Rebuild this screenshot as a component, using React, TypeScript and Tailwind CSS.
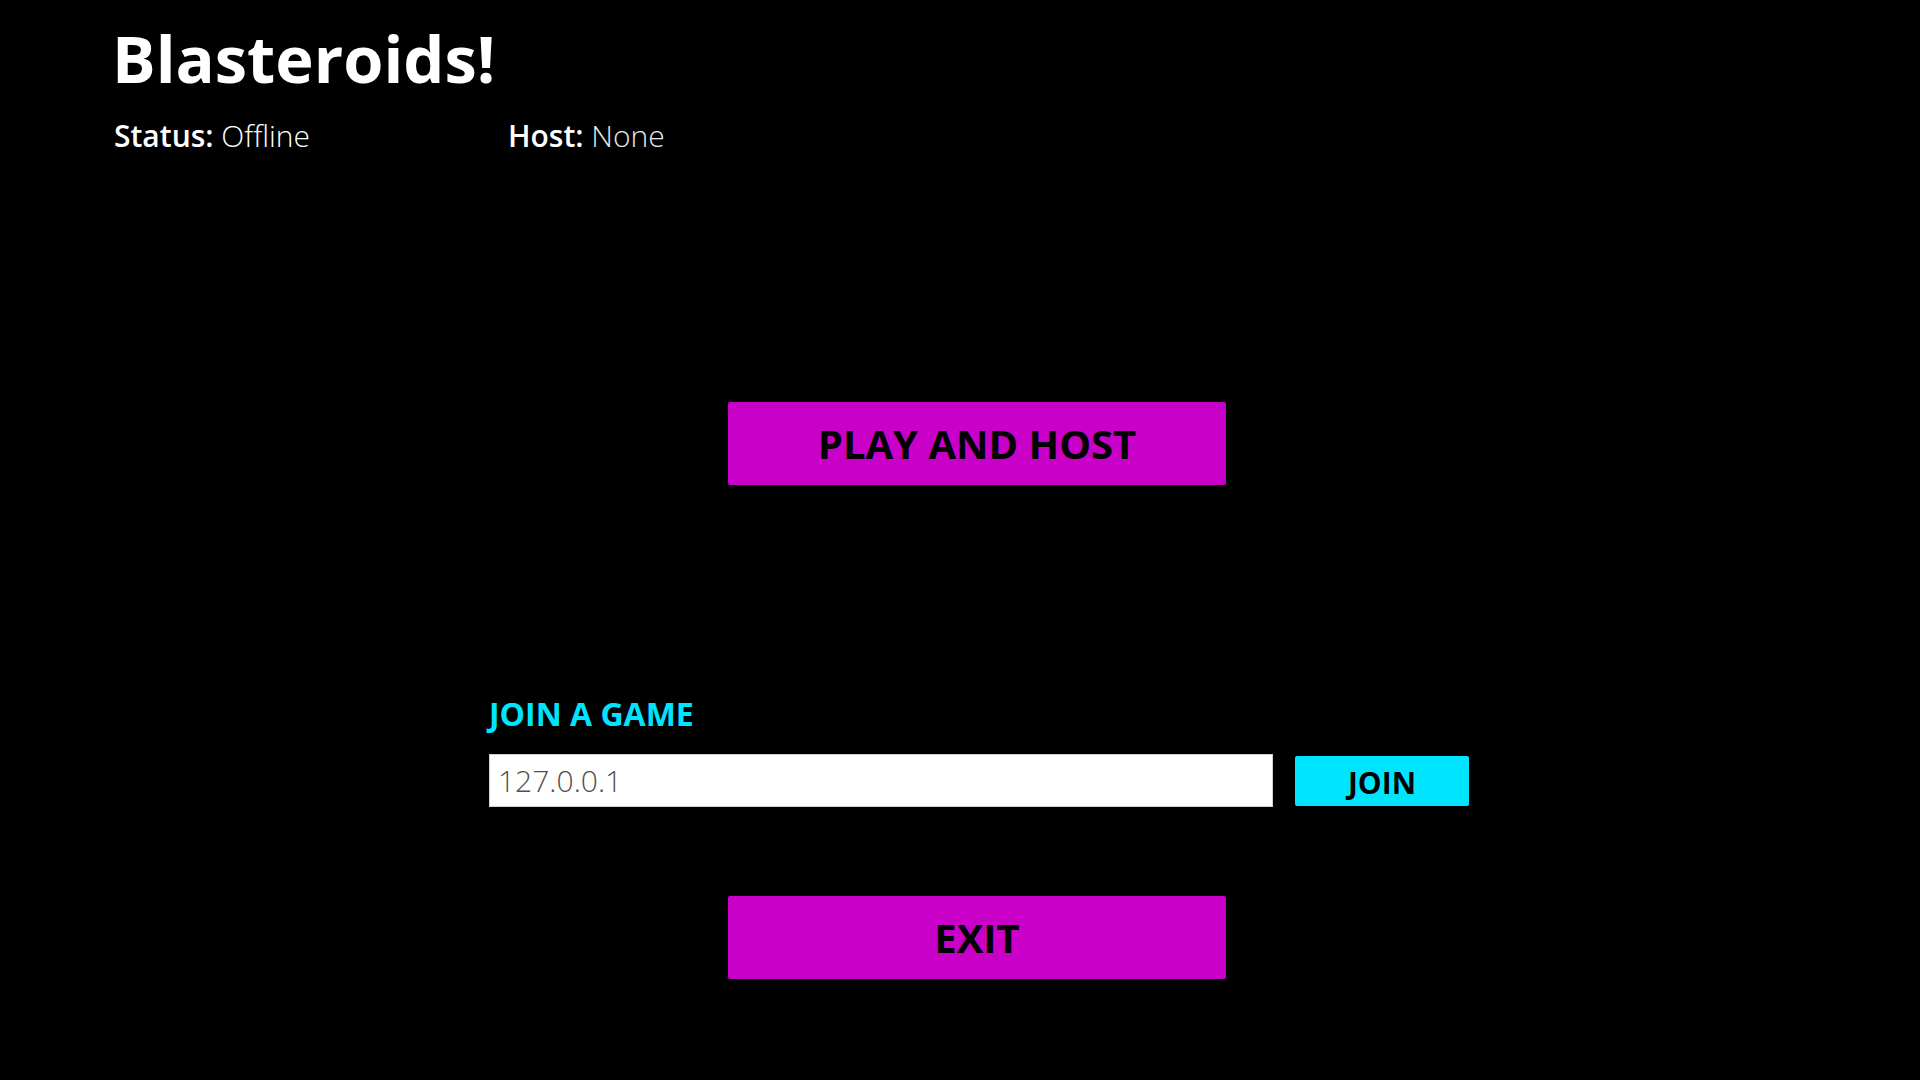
import React, { useState } from 'react';

export default function App() {
  const [address, setAddress] = useState('');

  return (
    <div className="min-h-screen w-full bg-black font-['Open_Sans',sans-serif] text-white">
      {/* Header */}
      <div className="pl-[112px] pt-[26px]">
        <h1 className="text-[65px] font-bold leading-[65px]">Blasteroids!</h1>
        <div className="mt-[30px] flex pl-[2px] text-[30px] leading-[30px]">
          <div className="w-[394px]">
            <span className="font-semibold">Status:</span>{' '}
            <span className="font-light">Offline</span>
          </div>
          <div>
            <span className="font-semibold">Host:</span>{' '}
            <span className="font-light text-[#e8e8e8]">None</span>
          </div>
        </div>
      </div>

      {/* Menu */}
      <div className="ml-[489px] mt-[251px] flex w-[980px] flex-col">
        <button className="ml-[239px] flex h-[83px] w-[498px] items-center justify-center rounded-[2px] bg-[#c800c8] text-[40px] font-bold text-black">
          PLAY AND HOST
        </button>

        <div className="mt-[213px] text-[32px] font-bold leading-[32px] text-[#00e5ff]">JOIN A GAME</div>

        <div className="mt-[24px] flex items-center gap-[22px]">
          <input
            value={address}
            onChange={e => setAddress(e.target.value)}
            placeholder="127.0.0.1"
            className="h-[53px] w-[784px] border border-[#cfcfcf] bg-white pl-[8px] text-[30px] font-light text-[#555] placeholder-[#505050] outline-none"
          />
          <button className="flex h-[50px] w-[174px] items-center justify-center rounded-[2px] bg-[#00e5ff] pt-[4px] text-[30px] font-bold text-black">
            JOIN
          </button>
        </div>

        <button className="ml-[239px] mt-[89px] flex h-[83px] w-[498px] items-center justify-center rounded-[2px] bg-[#c800c8] text-[40px] font-bold text-black">
          EXIT
        </button>
      </div>
    </div>
  );
}
